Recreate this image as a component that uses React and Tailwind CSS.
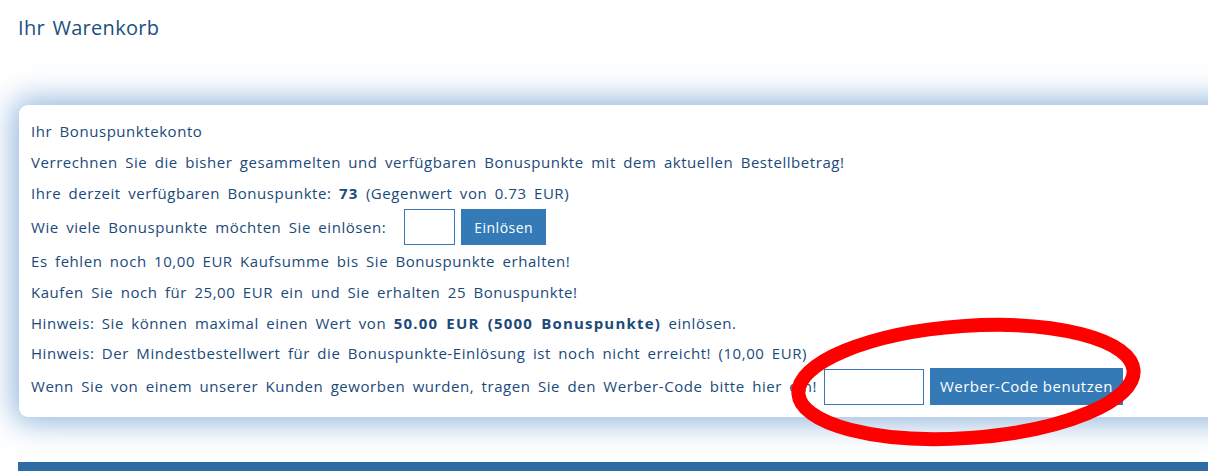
export default function App() {
  return (
    <div className="w-[1208px] h-[471px] overflow-hidden bg-white relative text-[#1b4a7a] font-['Open_Sans','Noto_Sans',sans-serif]">
      <div className="h-[56px] pl-[18px] pt-[14px] text-[20px] leading-[28px] tracking-[0.3px] [word-spacing:2px] text-[#1b4f80]">Ihr Warenkorb</div>
      <div className="h-[49px]" />
      <div className="ml-[19px] w-[1230px] bg-white rounded-[9px] shadow-[0_0_30px_6px_rgba(60,125,195,0.55)] pl-[12px] pt-[11px] pb-[12px] text-[15px] tracking-[0.55px] [word-spacing:3px]">
        <div className="h-[31px] flex items-center">Ihr Bonuspunktekonto</div>
        <div className="h-[31px] flex items-center">Verrechnen Sie die bisher gesammelten und verfügbaren Bonuspunkte mit dem aktuellen Bestellbetrag!</div>
        <div className="h-[31px] flex items-center">Ihre derzeit verfügbaren Bonuspunkte:&nbsp;<b className="font-bold tracking-[1.2px]">73</b>&nbsp;(Gegenwert von 0.73 EUR)</div>
        <div className="h-[36px] flex items-center">
          <span>Wie viele Bonuspunkte möchten Sie einlösen:</span>
          <input className="ml-[18px] w-[51px] h-[36px] border border-[#3a78b5] bg-white outline-none" />
          <button className="ml-[6px] h-[36px] w-[85px] bg-[#337ab7] text-white text-[14px] tracking-[0.5px]">Einlösen</button>
        </div>
        <div className="h-[32px] flex items-center">Es fehlen noch 10,00 EUR Kaufsumme bis Sie Bonuspunkte erhalten!</div>
        <div className="h-[31px] flex items-center">Kaufen Sie noch für 25,00 EUR ein und Sie erhalten 25 Bonuspunkte!</div>
        <div className="h-[31px] flex items-center">Hinweis: Sie können maximal einen Wert von&nbsp;<b className="font-bold tracking-[1.2px]">50.00 EUR (5000 Bonuspunkte)</b>&nbsp;einlösen.</div>
        <div className="h-[29px] flex items-center">Hinweis: Der Mindestbestellwert für die Bonuspunkte-Einlösung ist noch nicht erreicht! (10,00 EUR)</div>
        <div className="h-[37px] flex items-center">
          <span>Wenn Sie von einem unserer Kunden geworben wurden, tragen Sie den Werber-Code bitte hier ein!</span>
          <input className="ml-[7px] w-[100px] h-[36px] border border-[#3a78b5] bg-white outline-none" />
          <button className="ml-[6px] h-[37px] w-[193px] bg-[#337ab7] text-white text-[15px] tracking-[0.5px]">Werber-Code benutzen</button>
        </div>
      </div>
      <div className="mt-[45px] ml-[18px] h-[20px] bg-[#2e6ca4]" />
      <svg className="absolute left-0 top-0 pointer-events-none" width="1208" height="471">
        <ellipse cx="966" cy="382" rx="168" ry="56" fill="none" stroke="#ff0000" strokeWidth="14" transform="rotate(-4 966 382)" />
      </svg>
    </div>
  );
}
